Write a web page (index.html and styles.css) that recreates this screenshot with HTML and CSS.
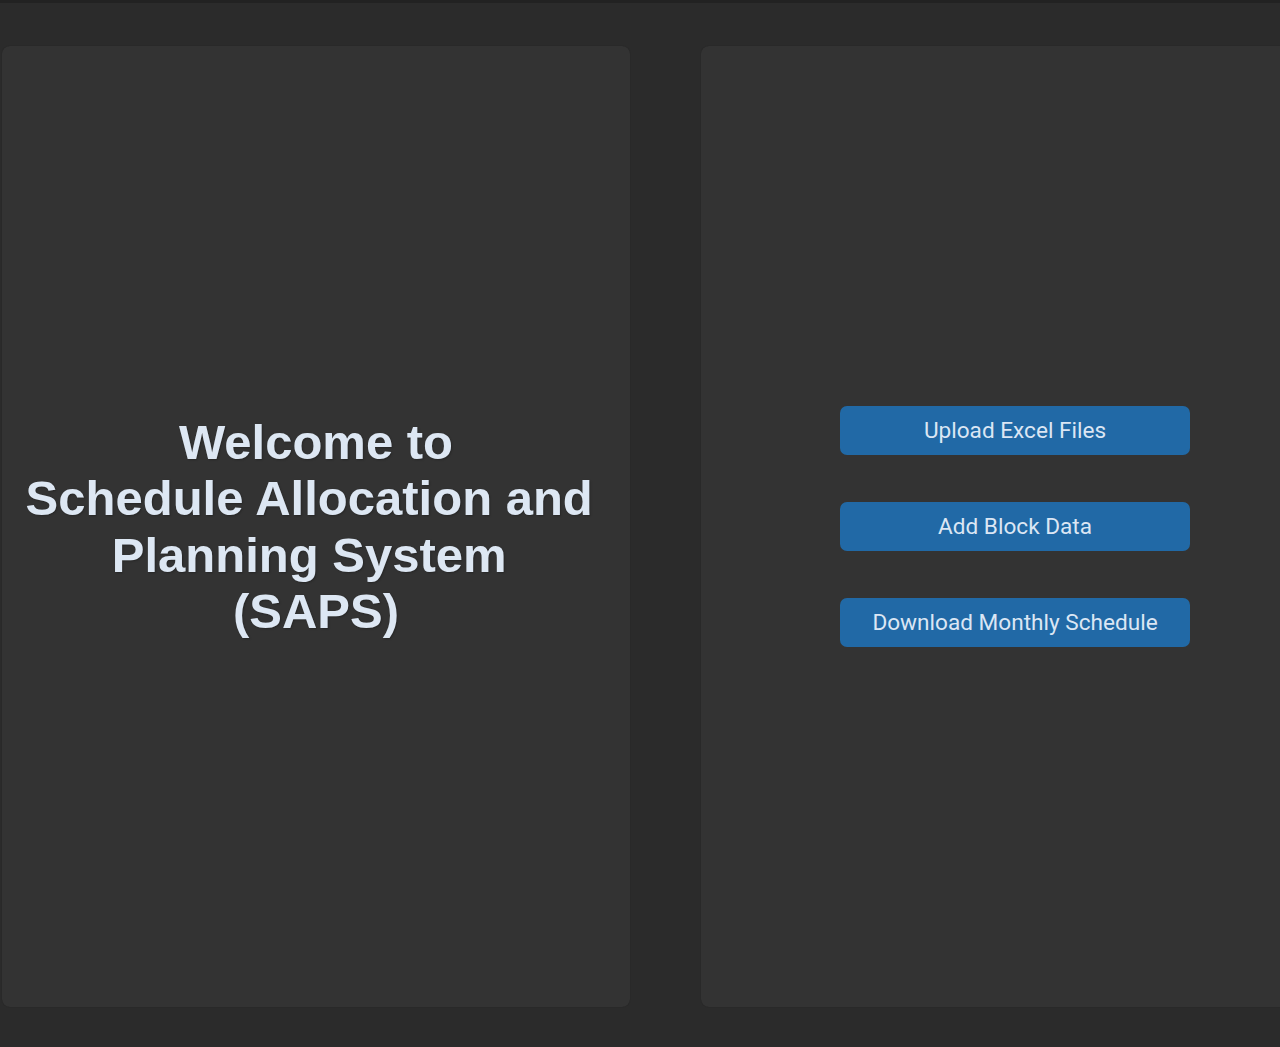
FILE: index.html
```html
<!DOCTYPE html>
<html lang="en">
<head>
<meta charset="utf-8">
<title>SAPS</title>
<link rel="stylesheet" href="styles.css">
</head>
<body>
<div class="topbar"></div>
<main class="layout">
  <section class="panel panel-left">
    <h1 class="title">Welcome to<br>Schedule Allocation and&nbsp;<br>Planning System&nbsp;<br>(SAPS)</h1>
  </section>
  <section class="panel panel-right">
    <div class="actions">
      <button class="btn" type="button">Upload Excel Files</button>
      <button class="btn" type="button">Add Block Data</button>
      <button class="btn" type="button">Download Monthly Schedule</button>
    </div>
  </section>
</main>
</body>
</html>
```

FILE: styles.css
```css
html, body {
  margin: 0;
  padding: 0;
  height: 100%;
  overflow: hidden;
}
body {
  background: #2b2b2b;
  font-family: "Liberation Sans", Arial, sans-serif;
}
.topbar {
  height: 3px;
  background: #222222;
}
.layout {
  display: flex;
  gap: 71px;
  padding: 43px 0 0 2px;
  width: max-content;
}
.panel {
  width: 628px;
  height: 961px;
  flex: 0 0 628px;
  background: #333333;
  border-radius: 8px;
  display: flex;
  align-items: center;
  justify-content: center;
  box-shadow: 0 0 1px rgba(0,0,0,0.3);
}
.title {
  margin: 0;
  font-family: "Liberation Sans", Arial, sans-serif;
  font-weight: 700;
  font-size: 49px;
  line-height: 56.5px;
  color: #dde7f3;
  text-align: center;
  text-shadow: 1px 1px 2px rgba(0,0,0,0.25);
}
.actions {
  display: flex;
  flex-direction: column;
  gap: 47px;
}
.btn {
  width: 350px;
  height: 49px;
  border: none;
  border-radius: 7px;
  background: #2169a6;
  color: #dbe6f4;
  font-family: Roboto, "Liberation Sans", sans-serif;
  font-size: 22.6px;
  padding: 0;
  cursor: pointer;
}
```
